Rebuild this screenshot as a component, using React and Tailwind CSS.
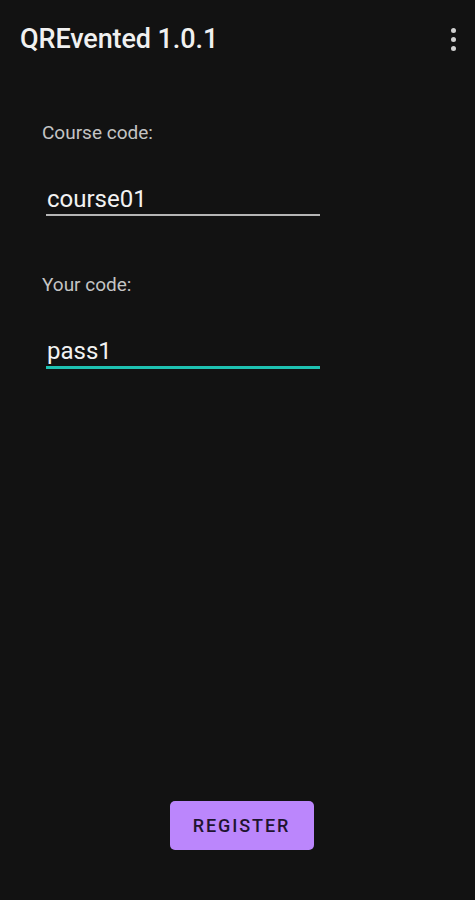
import { useState } from "react";

function Field({ label, value, focused }) {
    return (
        <div className="flex flex-col">
            <label className="pl-[42px] text-[19px] leading-[22px] text-[#c4c4c4]">{label}</label>
            <div className="ml-[46px] w-[274px] mt-[41px]">
                <div className="px-[1px] text-[24px] leading-[28px] text-[#f2f2f2]">{value}</div>
                <div className={`mt-[1px] ${focused ? "h-[3px] bg-[#1ec2b2]" : "h-[2px] bg-[#b5b5b5]"}`} />
            </div>
        </div>
    )
}

export default function App() {
    const [course] = useState("course01");
    const [code] = useState("pass1");

    return (
        <div className="w-[475px] h-[900px] bg-[#121212] flex flex-col font-['Roboto',sans-serif]">
            <div className="h-[80px] flex items-center justify-between pl-[20px] pr-[12px] pb-[2px]">
                <h1 className="text-[27px] font-medium text-[#f0f0f0] tracking-[-0.1px]">QREvented 1.0.1</h1>
                <div className="flex flex-col gap-[4px] items-center w-[20px]">
                    <span className="w-[5px] h-[5px] rounded-full bg-[#d0d0d0]" />
                    <span className="w-[5px] h-[5px] rounded-full bg-[#d0d0d0]" />
                    <span className="w-[5px] h-[5px] rounded-full bg-[#d0d0d0]" />
                </div>
            </div>

            <div className="flex flex-col gap-[57.5px] mt-[42px]">
                <Field label="Course code:" value={course} />
                <Field label="Your code:" value={code} focused />
            </div>

            <div className="flex-1" />

            <div className="flex justify-center pb-[50px] pl-[8px]">
                <button className="w-[144px] h-[49px] rounded-[5px] bg-[#bb86fc] text-[#1f1430] text-[18px] font-medium tracking-[1.9px]">
                    REGISTER
                </button>
            </div>
        </div>
    )
}
